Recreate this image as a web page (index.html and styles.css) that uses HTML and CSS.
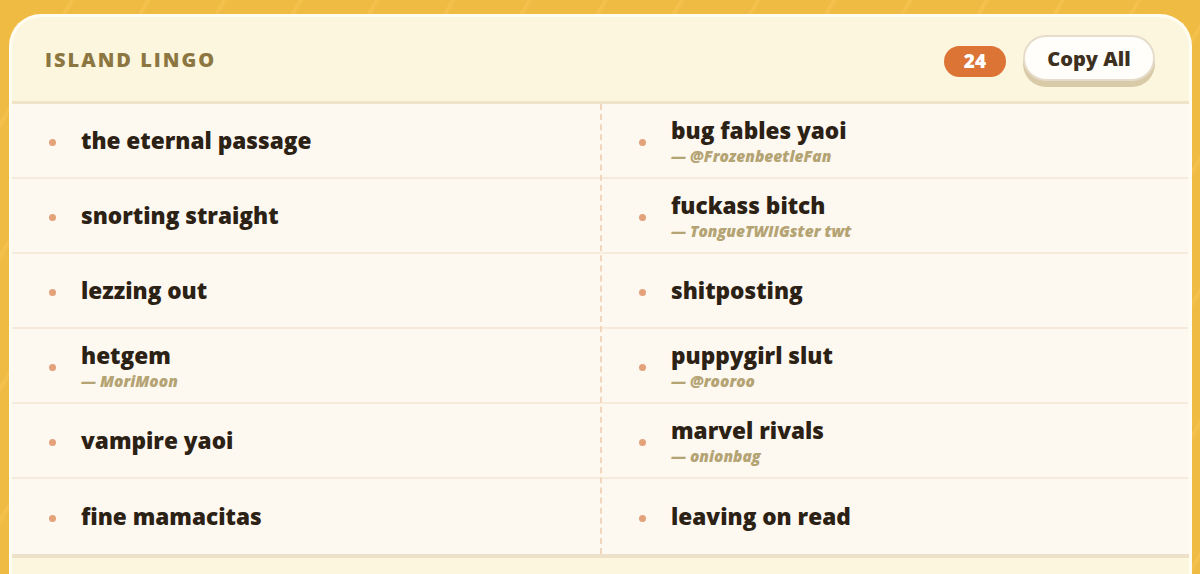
FILE: index.html
```html
<!DOCTYPE html>
<html>
<head>
<meta charset="utf-8">
<link rel="stylesheet" href="styles.css">
</head>
<body>
<div class="card">
  <div class="header">
    <h1 class="title">ISLAND LINGO</h1>
    <div class="actions">
      <span class="badge">24</span>
      <button class="copy">Copy All</button>
    </div>
  </div>
  <div class="grid">
    <div class="col">
      <div class="cell"><span class="dot"></span><div class="txt"><div class="term">the eternal passage</div></div></div>
      <div class="cell"><span class="dot"></span><div class="txt"><div class="term">snorting straight</div></div></div>
      <div class="cell"><span class="dot"></span><div class="txt"><div class="term">lezzing out</div></div></div>
      <div class="cell"><span class="dot"></span><div class="txt"><div class="term">hetgem</div><div class="by">— MoriMoon</div></div></div>
      <div class="cell"><span class="dot"></span><div class="txt"><div class="term">vampire yaoi</div></div></div>
      <div class="cell"><span class="dot"></span><div class="txt"><div class="term">fine mamacitas</div></div></div>
    </div>
    <div class="col right">
      <div class="cell"><span class="dot"></span><div class="txt"><div class="term">bug fables yaoi</div><div class="by">— @FrozenbeetleFan</div></div></div>
      <div class="cell"><span class="dot"></span><div class="txt"><div class="term">fuckass bitch</div><div class="by">— TongueTWIIGster twt</div></div></div>
      <div class="cell"><span class="dot"></span><div class="txt"><div class="term">shitposting</div></div></div>
      <div class="cell"><span class="dot"></span><div class="txt"><div class="term">puppygirl slut</div><div class="by">— @rooroo</div></div></div>
      <div class="cell"><span class="dot"></span><div class="txt"><div class="term">marvel rivals</div><div class="by">— onionbag</div></div></div>
      <div class="cell"><span class="dot"></span><div class="txt"><div class="term">leaving on read</div></div></div>
    </div>
  </div>
</div>
</body>
</html>
```
FILE: styles.css
```css
html, body {
  margin: 0;
  padding: 0;
  height: 100%;
  overflow: hidden;
}
body {
  background: #f0bb42;
  background-image: repeating-linear-gradient(120deg, rgba(255,220,120,0) 0px, rgba(255,220,120,0) 60px, rgba(255,215,110,0.3) 62px, rgba(255,220,120,0) 66px);
  font-family: "Open Sans", "Noto Sans", sans-serif;
}
.card {
  margin: 14px 8px 0 9px;
  border: 3px solid #fffcf2;
  border-bottom: none;
  border-radius: 32px 32px 0 0;
  background: #fdf6df;
  height: 560px;
  box-sizing: border-box;
  overflow: hidden;
}
.header {
  height: 84px;
  display: flex;
  align-items: center;
  justify-content: space-between;
  padding: 0 33px 0 33px;
  border-bottom: 3px solid #efe3c8;
}
.title {
  margin: 0;
  font-size: 20px;
  font-weight: 800;
  letter-spacing: 2px;
  color: #8c7641;
}
.actions {
  display: flex;
  align-items: center;
  gap: 17px;
  margin-top: 4px;
}
.badge {
  display: inline-flex;
  align-items: center;
  justify-content: center;
  width: 62px;
  height: 31px;
  border-radius: 16px;
  background: #dc7436;
  color: #fff;
  font-weight: 800;
  font-size: 19px;
}
.copy {
  width: 132px;
  height: 46px;
  border-radius: 24px;
  border: 2px solid #e6dccb;
  background: #fffefb;
  box-shadow: 0 6px 0 #d9cba8;
  font-family: "Open Sans", "Noto Sans", sans-serif;
  font-weight: 800;
  font-size: 20px;
  color: #3d3020;
  padding: 0;
  margin-top: -6px;
  margin-right: 1px;
}
.grid {
  display: grid;
  grid-template-columns: 589px 587px;
  background: #fdf8f0;
  border-bottom: 4px solid #eee1c9;
}
.col.right {
  border-left: 2px dashed #f2d5bd;
  margin-left: -1px;
}
.cell {
  height: 73px;
  border-bottom: 2px solid #f6eadb;
  display: flex;
  align-items: center;
  padding-left: 37px;
}
.col.right .cell {
  padding-left: 37px;
}
.cell:last-child {
  border-bottom: none;
  height: 75px;
}
.dot {
  width: 7px;
  height: 7px;
  border-radius: 50%;
  background: #e3a27a;
  flex: none;
  margin-right: 25px;
  margin-top: 3px;
}
.txt {
  display: flex;
  flex-direction: column;
}
.term {
  font-size: 22.6px;
  font-weight: 800;
  color: #2b2114;
  line-height: 28px;
  margin-top: 1px;
}
.by {
  font-size: 15.5px;
  font-style: italic;
  font-weight: 800;
  color: #b4a373;
  line-height: 20px;
  margin-top: 1px;
}
```
